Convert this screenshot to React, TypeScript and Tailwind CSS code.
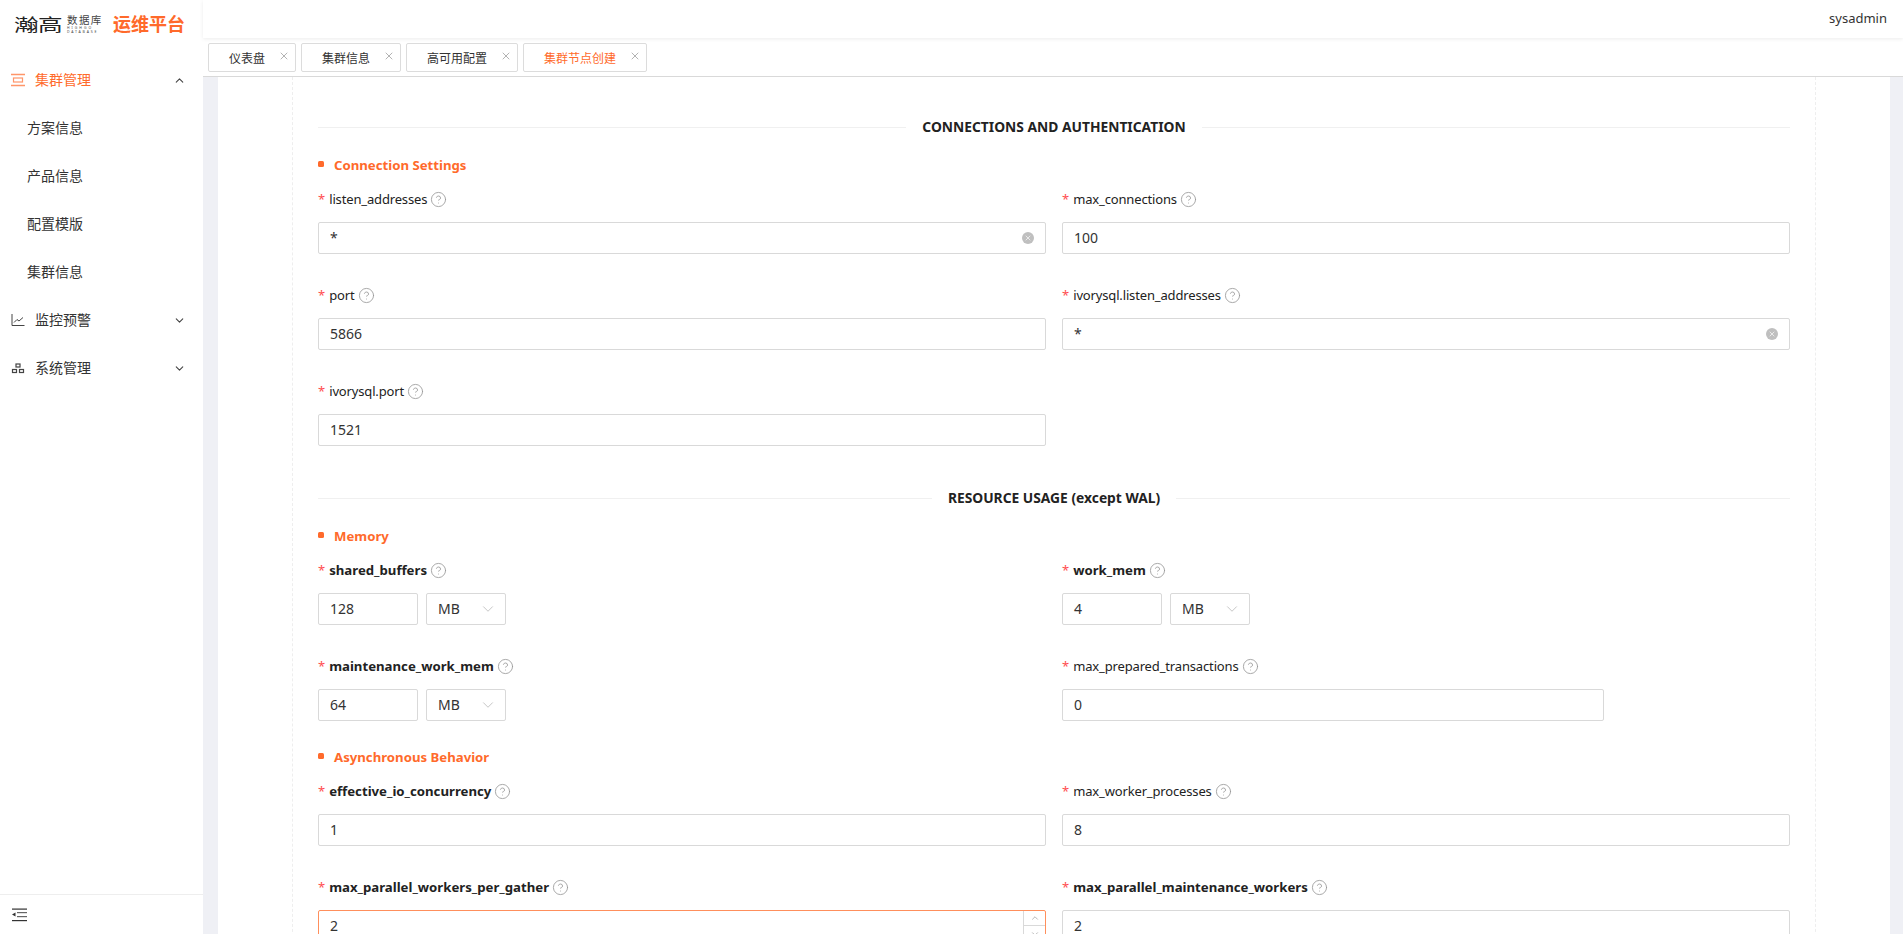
import { ChevronDown, ChevronUp, CircleHelp, X } from 'lucide-react'

const tabs = [
  { name: '仪表盘', w: 'w-[88px]' },
  { name: '集群信息', w: 'w-[100px]' },
  { name: '高可用配置', w: 'w-[112px]' },
  { name: '集群节点创建', w: 'w-[124px]', active: true },
]

const subMenus = ['方案信息', '产品信息', '配置模版', '集群信息']

function ClusterIcon() {
  return (
    <svg width="14" height="14" viewBox="0 0 14 14" className="text-[#ff6a2b] opacity-70">
      <path d="M0 1.5h14M0 12.5h14" stroke="currentColor" strokeWidth="1.6" />
      <rect x="2.5" y="5" width="9" height="4" fill="none" stroke="currentColor" strokeWidth="1.2" />
    </svg>
  )
}

function ChartIcon() {
  return (
    <svg width="14" height="14" viewBox="0 0 14 14" fill="none" stroke="#444" strokeWidth="1">
      <path d="M1 1v11.5h12.5" />
      <path d="M3 9.5l3-3 2 1.5 4-3.5" />
    </svg>
  )
}

function OrgIcon() {
  return (
    <svg width="14" height="14" viewBox="0 0 14 14" fill="none" stroke="#444" strokeWidth="1.2">
      <rect x="5" y="3" width="4" height="3" />
      <rect x="1.5" y="8.5" width="4" height="3" />
      <rect x="8.5" y="8.5" width="4" height="3" />
    </svg>
  )
}

function OutdentIcon() {
  return (
    <svg width="15" height="14" viewBox="0 0 15 14" fill="#333">
      <rect x="0" y="0.5" width="15" height="1.2" />
      <rect x="5" y="4" width="10" height="1.2" fill="#666" />
      <rect x="5" y="8" width="10" height="1.2" fill="#666" />
      <rect x="0" y="12" width="15" height="1.2" />
      <path d="M3.5 4.5v4L0 6.5z" />
    </svg>
  )
}

function MenuItem({ icon, name, open, active }: { icon: React.ReactNode; name: string; open?: boolean; active?: boolean }) {
  return (
    <div className={`flex h-12 items-center pl-[11px] pr-[17px] text-sm ${active ? 'text-[#ff6a2b]' : 'text-[#333]'}`}>
      <span className="mr-[10px] flex w-[14px] justify-center">{icon}</span>
      <span className="flex-1">{name}</span>
      {open ? <ChevronUp size={13} className="text-[#444]" /> : <ChevronDown size={13} className="text-[#444]" />}
    </div>
  )
}

function Sidebar() {
  return (
    <aside className="z-10 flex h-full w-[203px] shrink-0 flex-col bg-white">
      <div className="flex h-[56px] items-center pb-2 pl-[14px]">
        <span className="inline-block w-[53px] origin-left scale-x-[1.45] text-[17px] leading-none tracking-[-0.5px] text-[#222]">瀚高</span>
        <div className="flex w-[35px] flex-col leading-none whitespace-nowrap text-[#444]">
          <span className="text-[10.5px] leading-[10px] tracking-[1.4px]">数据库</span>
          <span className="mt-px text-[3.5px] leading-[4px] tracking-[2px]">HIGHGO</span>
          <span className="text-[3.5px] leading-[4px] tracking-[1.8px]">DATABASE</span>
        </div>
        <span className="ml-[11px] text-lg leading-none font-bold text-[#ff6a2b]">运维平台</span>
      </div>
      <nav>
        <MenuItem icon={<ClusterIcon />} name="集群管理" open active />
        {subMenus.map(name => (
          <div key={name} className="flex h-12 items-center pl-[27px] text-sm text-[#333]">
            {name}
          </div>
        ))}
        <MenuItem icon={<ChartIcon />} name="监控预警" />
        <MenuItem icon={<OrgIcon />} name="系统管理" />
      </nav>
      <div className="mt-auto flex h-10 items-center border-t border-[#eeeeee] pl-3">
        <OutdentIcon />
      </div>
    </aside>
  )
}

function Tabs() {
  return (
    <div className="flex h-[39px] shrink-0 items-start gap-[5px] border-b border-[#d9d9d9] bg-white pt-[5px] pl-[5px]">
      {tabs.map(tab => (
        <div
          key={tab.name}
          className={`flex h-[29px] ${tab.w} items-center justify-between rounded-[2px] border border-[#dcdcdc] pr-[5px] pl-5 text-xs ${tab.active ? 'text-[#ff6a2b]' : 'text-[#333]'}`}
        >
          <span className="mt-[3px]">{tab.name}</span>
          <X size={12} strokeWidth={1} className="-mt-[3px] text-[#666]" />
        </div>
      ))}
    </div>
  )
}

function Divider({ title }: { title: string }) {
  return (
    <div className="flex h-[22px] items-center gap-4">
      <div className="h-px flex-1 bg-[#f0f0f0]" />
      <span className="text-[13.8px] font-bold text-[#222]">{title}</span>
      <div className="h-px flex-1 bg-[#f0f0f0]" />
    </div>
  )
}

function SectionTitle({ title, className = '' }: { title: string; className?: string }) {
  return (
    <div className={`mb-[6px] flex h-6 items-center gap-[10px] ${className}`}>
      <span className="-mt-[2px] h-[6px] w-[6px] rounded-[1.5px] bg-[#ff6a2b]" />
      <span className="mt-[2px] text-[13.2px] font-bold text-[#ff6a2b]">{title}</span>
    </div>
  )
}

function Label({ name, bold }: { name: string; bold?: boolean }) {
  return (
    <div className="mb-[7px] flex h-8 items-center pt-[2px] text-[13px] text-[#222]">
      <span className="mr-1 text-[#ff4d4f]">*</span>
      <span className={bold ? 'text-[13.2px] font-bold' : 'tracking-[-0.15px]'}>{name}</span>
      <CircleHelp size={17} strokeWidth={1.2} className="mb-[2px] ml-[3px] text-[#999]" />
    </div>
  )
}

function Field({ name, value, bold, clear, focused, width = 'w-full' }: { name: string; value: string; bold?: boolean; clear?: boolean; focused?: boolean; width?: string }) {
  return (
    <div className="mb-[25px]">
      <Label name={name} bold={bold} />
      <div className={`relative flex h-8 ${width} items-center rounded-[2px] border pl-[11px] text-sm leading-[12px] text-[#333] ${focused ? 'border-[#ff8f5c]' : 'border-[#d9d9d9]'}`}>
        {value}
        {clear && (
          <span className="absolute right-[11px] flex h-3 w-3 items-center justify-center rounded-full bg-[#bfbfbf]">
            <X size={8} strokeWidth={2} className="text-white" />
          </span>
        )}
        {focused && (
          <div className="absolute top-0 right-0 flex h-full w-[22px] flex-col border-l border-[#d9d9d9] text-[#aaa]">
            <div className="flex h-1/2 items-center justify-center border-b border-[#d9d9d9]">
              <ChevronUp size={10} />
            </div>
            <div className="flex h-1/2 items-center justify-center">
              <ChevronDown size={10} />
            </div>
          </div>
        )}
      </div>
    </div>
  )
}

function UnitField({ name, value }: { name: string; value: string }) {
  return (
    <div className="mb-[25px]">
      <Label name={name} bold />
      <div className="flex gap-2 text-sm leading-none text-[#333]">
        <div className="flex h-8 w-[100px] items-center rounded-[2px] border border-[#d9d9d9] pl-[11px]">{value}</div>
        <div className="flex h-8 w-20 items-center justify-between rounded-[2px] border border-[#d9d9d9] pr-2 pl-[11px]">
          <span>MB</span>
          <ChevronDown size={18} strokeWidth={0.9} className="text-[#aaa]" />
        </div>
      </div>
    </div>
  )
}

export default function App() {
  return (
    <div className="flex h-screen overflow-hidden bg-[#eff0f5] font-['Noto_Sans','Noto_Sans_CJK_SC',sans-serif]">
      <Sidebar />
      <div className="flex min-w-0 flex-1 flex-col">
        <header className="z-10 flex h-[38px] shrink-0 items-center justify-end bg-white pr-4 text-[13px] text-[#333] shadow-[0_1px_4px_rgba(0,0,0,0.08)]">
          sysadmin
        </header>
        <Tabs />
        <main className="mr-[13px] ml-[15px] min-h-0 flex-1 overflow-hidden bg-white px-[74px]">
          <div className="border-x border-dashed border-[#eeeeee] px-[25px] pt-[39px]">
            <Divider title="CONNECTIONS AND AUTHENTICATION" />
            <SectionTitle title="Connection Settings" className="mt-[15px]" />
            <div className="grid grid-cols-2 gap-x-4">
              <Field name="listen_addresses" value="*" clear />
              <Field name="max_connections" value="100" />
              <Field name="port" value="5866" />
              <Field name="ivorysql.listen_addresses" value="*" clear />
              <Field name="ivorysql.port" value="1521" />
            </div>
            <div className="mt-4">
              <Divider title="RESOURCE USAGE (except WAL)" />
            </div>
            <SectionTitle title="Memory" className="mt-[15px]" />
            <div className="grid grid-cols-2 gap-x-4">
              <UnitField name="shared_buffers" value="128" />
              <UnitField name="work_mem" value="4" />
              <UnitField name="maintenance_work_mem" value="64" />
              <Field name="max_prepared_transactions" value="0" width="w-[542px]" />
            </div>
            <SectionTitle title="Asynchronous Behavior" className="-mt-px" />
            <div className="grid grid-cols-2 gap-x-4">
              <Field name="effective_io_concurrency" value="1" bold />
              <Field name="max_worker_processes" value="8" />
              <Field name="max_parallel_workers_per_gather" value="2" bold focused />
              <Field name="max_parallel_maintenance_workers" value="2" bold />
            </div>
          </div>
        </main>
      </div>
    </div>
  )
}
